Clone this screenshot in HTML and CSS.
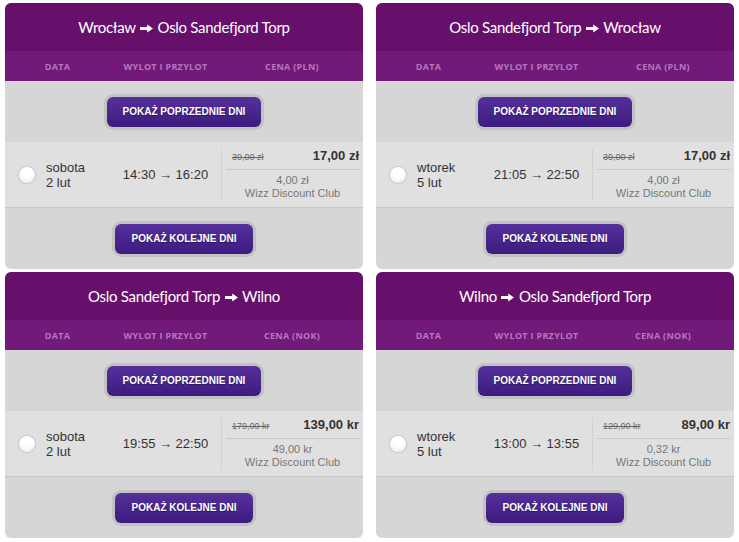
FILE: index.html
```html
<!DOCTYPE html>
<html lang="pl">
<head>
    <meta charset="UTF-8">
    <title>Loty</title>
    <link rel="stylesheet" href="styles.css">
</head>
<body>

<div class="board">

    <div class="flight-box">
        <div class="route">Wrocław <svg class="arrow" viewBox="0 0 13 9"><path d="M0 3.1h7.2V0.4l5.8 4.1-5.8 4.1V5.9H0z"/></svg> Oslo Sandefjord Torp</div>
        <div class="cols">
            <span class="col-date">DATA</span>
            <span class="col-time">WYLOT I PRZYLOT</span>
            <span class="col-price">CENA (PLN)</span>
        </div>
        <div class="more"><button type="button" class="nav-btn">Pokaż poprzednie dni</button></div>
        <div class="flight-row">
            <div class="col-date day">
                <span class="radio"></span>
                <span class="day-text">sobota<br>2 lut</span>
            </div>
            <div class="col-time hours">14:30 → 16:20</div>
            <div class="col-price fare">
                <div class="fare-top">
                    <span class="old">39,00 zł</span>
                    <span class="new">17,00 zł</span>
                </div>
                <div class="club">4,00 zł<br>Wizz Discount Club</div>
            </div>
        </div>
        <div class="more"><button type="button" class="nav-btn">Pokaż kolejne dni</button></div>
    </div>

    <div class="flight-box">
        <div class="route">Oslo Sandefjord Torp <svg class="arrow" viewBox="0 0 13 9"><path d="M0 3.1h7.2V0.4l5.8 4.1-5.8 4.1V5.9H0z"/></svg> Wrocław</div>
        <div class="cols">
            <span class="col-date">DATA</span>
            <span class="col-time">WYLOT I PRZYLOT</span>
            <span class="col-price">CENA (PLN)</span>
        </div>
        <div class="more"><button type="button" class="nav-btn">Pokaż poprzednie dni</button></div>
        <div class="flight-row">
            <div class="col-date day">
                <span class="radio"></span>
                <span class="day-text">wtorek<br>5 lut</span>
            </div>
            <div class="col-time hours">21:05 → 22:50</div>
            <div class="col-price fare">
                <div class="fare-top">
                    <span class="old">39,00 zł</span>
                    <span class="new">17,00 zł</span>
                </div>
                <div class="club">4,00 zł<br>Wizz Discount Club</div>
            </div>
        </div>
        <div class="more"><button type="button" class="nav-btn">Pokaż kolejne dni</button></div>
    </div>

    <div class="flight-box">
        <div class="route">Oslo Sandefjord Torp <svg class="arrow" viewBox="0 0 13 9"><path d="M0 3.1h7.2V0.4l5.8 4.1-5.8 4.1V5.9H0z"/></svg> Wilno</div>
        <div class="cols">
            <span class="col-date">DATA</span>
            <span class="col-time">WYLOT I PRZYLOT</span>
            <span class="col-price">CENA (NOK)</span>
        </div>
        <div class="more"><button type="button" class="nav-btn">Pokaż poprzednie dni</button></div>
        <div class="flight-row">
            <div class="col-date day">
                <span class="radio"></span>
                <span class="day-text">sobota<br>2 lut</span>
            </div>
            <div class="col-time hours">19:55 → 22:50</div>
            <div class="col-price fare">
                <div class="fare-top">
                    <span class="old">179,00 kr</span>
                    <span class="new">139,00 kr</span>
                </div>
                <div class="club">49,00 kr<br>Wizz Discount Club</div>
            </div>
        </div>
        <div class="more"><button type="button" class="nav-btn">Pokaż kolejne dni</button></div>
    </div>

    <div class="flight-box">
        <div class="route">Wilno <svg class="arrow" viewBox="0 0 13 9"><path d="M0 3.1h7.2V0.4l5.8 4.1-5.8 4.1V5.9H0z"/></svg> Oslo Sandefjord Torp</div>
        <div class="cols">
            <span class="col-date">DATA</span>
            <span class="col-time">WYLOT I PRZYLOT</span>
            <span class="col-price">CENA (NOK)</span>
        </div>
        <div class="more"><button type="button" class="nav-btn">Pokaż poprzednie dni</button></div>
        <div class="flight-row">
            <div class="col-date day">
                <span class="radio"></span>
                <span class="day-text">wtorek<br>5 lut</span>
            </div>
            <div class="col-time hours">13:00 → 13:55</div>
            <div class="col-price fare">
                <div class="fare-top">
                    <span class="old">129,00 kr</span>
                    <span class="new">89,00 kr</span>
                </div>
                <div class="club">0,32 kr<br>Wizz Discount Club</div>
            </div>
        </div>
        <div class="more"><button type="button" class="nav-btn">Pokaż kolejne dni</button></div>
    </div>

</div>

</body>
</html>
```

FILE: styles.css
```css
body {
    margin: 0;
    background: #fff;
    font-family: "Liberation Sans", Arial, sans-serif;
}
.board {
    display: grid;
    grid-template-columns: 358px 358px;
    column-gap: 13px;
    row-gap: 3px;
    padding: 3px 0 0 5px;
}
.flight-box {
    background-color: #d6d6d6;
    border-radius: 6px;
    overflow: hidden;
}
.route {
    height: 48px;
    line-height: 48px;
    background-color: #66106c;
    color: #fff;
    text-align: center;
    font-family: "Lato", sans-serif;
    font-size: 15px;
    letter-spacing: -0.3px;
}
.arrow {
    width: 13px;
    height: 9px;
    margin: 0 1px;
    fill: #fff;
    vertical-align: 0;
}
.cols {
    display: flex;
    height: 30px;
    align-items: center;
    background-color: #721a79;
    color: #b676be;
    font-family: "Open Sans", sans-serif;
    font-size: 9px;
    font-weight: bold;
    letter-spacing: 0.3px;
}
.col-date {
    width: 105px;
    text-align: center;
}
.col-time {
    width: 111px;
    text-align: center;
}
.col-price {
    flex: 1;
    text-align: center;
}
.more {
    height: 61px;
    display: flex;
    align-items: center;
    justify-content: center;
}
.nav-btn {
    height: 30px;
    padding: 0 16px;
    border: none;
    border-radius: 6px;
    background: linear-gradient(#55309b, #3d1b7f);
    box-shadow: 0 0 0 3px #c2c2c2;
    color: #fff;
    font-family: "Liberation Sans", Arial, sans-serif;
    font-size: 10px;
    font-weight: bold;
    text-transform: uppercase;
    text-shadow: 0 1px 1px rgba(0, 0, 0, 0.4);
    cursor: pointer;
}
.flight-row {
    display: flex;
    height: 65px;
    background-color: #e0e0e0;
    border-bottom: 1px solid #c6c6c6;
    color: #333;
}
.day {
    display: flex;
    align-items: center;
    text-align: left;
}
.radio {
    width: 16px;
    height: 16px;
    margin: 0 11px 0 14px;
    border-radius: 50%;
    background: radial-gradient(circle at 50% 35%, #fff 40%, #e6e6e6 100%);
    box-shadow: 0 0 2px rgba(0, 0, 0, 0.35);
}
.day-text {
    font-size: 13px;
    line-height: 15px;
}
.hours {
    display: flex;
    align-items: center;
    justify-content: center;
    font-size: 13px;
}
.fare {
    margin: 6px 0;
    padding: 0 4px;
    border-left: 1px solid #d2d2d2;
}
.fare-top {
    display: flex;
    justify-content: space-between;
    align-items: baseline;
    height: 21px;
    padding: 0 0 0 6px;
    border-bottom: 1px solid #c8c8c8;
}
.old {
    font-size: 9px;
    color: #666;
    text-decoration: line-through;
}
.new {
    font-size: 13px;
    font-weight: bold;
    color: #333;
}
.club {
    padding-top: 4px;
    font-size: 11px;
    line-height: 13px;
    color: #777;
}
```
